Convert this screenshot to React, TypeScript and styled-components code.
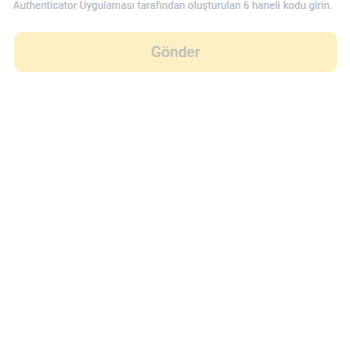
import styled, {createGlobalStyle} from "styled-components";

const GlobalStyle = createGlobalStyle`
    html, body {
        margin: 0;
        padding: 0;
        background: #fff;
    }
    body {
        font-family: Roboto, "Noto Sans", sans-serif;
    }
`

export default function App() {
    return <Page>
        <GlobalStyle/>
        <Hint>Authenticator Uygulaması tarafından oluşturulan 6 haneli kodu girin.</Hint>
        <SubmitButton disabled>Gönder</SubmitButton>
    </Page>
}

const Page = styled.div`
    display: flex;
    flex-direction: column;
    padding: 0 13px 0 14px;
    gap: 19px;
`

const Hint = styled.p`
    margin: -1px 0 0 -1px;
    font-size: 10.5px;
    line-height: 14px;
    font-weight: 500;
    color: #b7bdc6;
    white-space: nowrap;
`

const SubmitButton = styled.button`
    height: 40px;
    border: none;
    border-radius: 8px;
    background: #fdf0c2;
    color: #bdbdbd;
    font-family: Roboto, "Noto Sans", sans-serif;
    font-size: 15px;
    font-weight: 500;
    cursor: not-allowed;
`
